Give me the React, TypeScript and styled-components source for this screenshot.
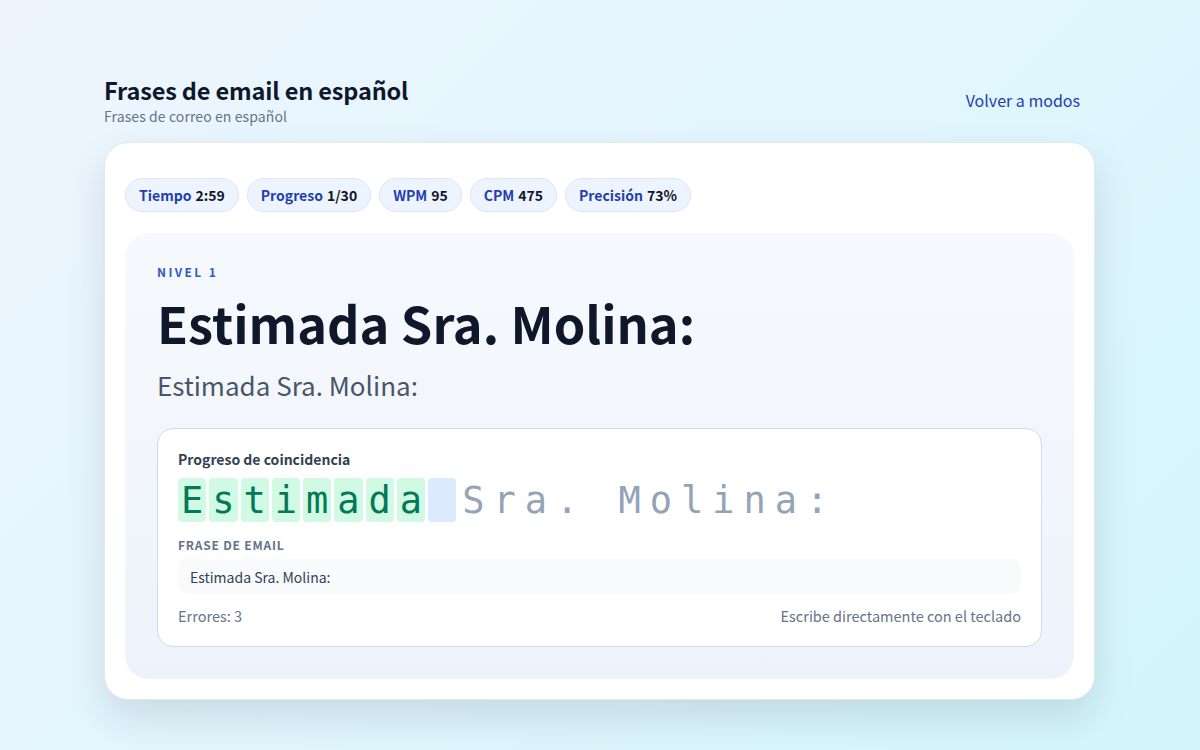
import styled, { createGlobalStyle } from "styled-components";

const GlobalStyle = createGlobalStyle`
  * { box-sizing: border-box; }
  html, body { margin: 0; padding: 0; }
  body {
    font-family: "Noto Sans CJK JP", "Noto Sans", sans-serif;
    color: #0f172a;
  }
`;

const Page = styled.div`
  min-height: 750px;
  background: linear-gradient(135deg, #eef5ff 0%, #e2f6fd 50%, #d2f6fb 100%);
  padding: 74px 105px 50px 104px;
`;

const Header = styled.header`
  display: flex;
  justify-content: space-between;
  align-items: center;
  margin-bottom: 16px;
`;

const TitleBlock = styled.div`
  display: flex;
  flex-direction: column;
`;

const PageTitle = styled.h1`
  margin: 0;
  font-size: 23.5px;
  line-height: 32px;
  font-weight: 700;
  letter-spacing: -0.15px;
  color: #0f172a;
`;

const PageSubtitle = styled.p`
  margin: 0;
  font-size: 14px;
  line-height: 20px;
  letter-spacing: 0.1px;
  color: #64748b;
`;

const BackLink = styled.a`
  font-size: 16px;
  color: #1e40af;
  text-decoration: none;
  margin-right: 15px;
  cursor: pointer;
`;

const Card = styled.section`
  background: #ffffff;
  border-radius: 24px;
  border: 1px solid #e2e8f0;
  box-shadow: 0 18px 40px rgba(15, 23, 42, 0.12);
  padding: 35px 20px 20px 20px;
`;

const Stats = styled.div`
  display: flex;
  gap: 8px;
  margin-bottom: 21px;
`;

const Pill = styled.div`
  display: flex;
  align-items: center;
  gap: 4px;
  height: 34px;
  padding: 0 13px;
  border-radius: 999px;
  background: #eef4ff;
  border: 1px solid #dbe6f7;
  font-size: 14px;
  font-weight: 700;
`;

const PillLabel = styled.span`
  color: #1e40af;
`;

const PillValue = styled.span`
  color: #0f172a;
`;

const Panel = styled.div`
  border-radius: 24px;
  background: linear-gradient(180deg, #f6f9fd 0%, #eef3fb 100%);
  padding: 30px 32px 32px 32px;
`;

const Level = styled.div`
  font-size: 12px;
  font-weight: 700;
  letter-spacing: 2.4px;
  color: #2f5bc7;
  line-height: 18px;
`;

const Phrase = styled.h2`
  margin: 6px 0 0 0;
  font-size: 50.5px;
  line-height: 70px;
  font-weight: 700;
  color: #0f172a;
`;

const Translation = styled.p`
  margin: 12px 0 0 0;
  font-size: 26px;
  line-height: 32px;
  color: #475569;
`;

const MatchBox = styled.div`
  margin-top: 27px;
  background: #ffffff;
  border: 1px solid #c9dcea;
  border-radius: 16px;
  padding: 20px;
`;

const MatchLabel = styled.div`
  font-size: 14px;
  font-weight: 700;
  color: #334155;
  line-height: 20px;
`;

const CharRow = styled.div`
  display: flex;
  gap: 3px;
  margin-top: 9px;
`;

const Char = styled.span<{ $state: "done" | "current" | "todo" }>`
  display: flex;
  align-items: center;
  justify-content: center;
  width: 28.25px;
  height: 44px;
  border-radius: 4px;
  font-family: "DejaVu Sans Mono", "Liberation Mono", monospace;
  font-size: 37px;
  background: ${(p) =>
    p.$state === "done" ? "#d1fae5" : p.$state === "current" ? "#dbeafe" : "transparent"};
  color: ${(p) => (p.$state === "done" ? "#047857" : "#94a3b8")};
`;

const SectionLabel = styled.div`
  margin-top: 15px;
  font-size: 12px;
  font-weight: 700;
  letter-spacing: 0.8px;
  color: #64748b;
  line-height: 16px;
`;

const EmailBox = styled.div`
  margin-top: 6px;
  height: 35px;
  display: flex;
  align-items: center;
  padding: 0 12px;
  border-radius: 10px;
  background: #f8fafc;
  font-size: 14px;
  color: #334155;
`;

const Footer = styled.div`
  display: flex;
  justify-content: space-between;
  margin-top: 12px;
  font-size: 14.5px;
  line-height: 20px;
  color: #64748b;
`;

const target = "Estimada Sra. Molina:";
const typed = 8;

const stats = [
  { label: "Tiempo", value: "2:59" },
  { label: "Progreso", value: "1/30" },
  { label: "WPM", value: "95" },
  { label: "CPM", value: "475" },
  { label: "Precisión", value: "73%" },
];

export default function App() {
  return (
    <>
      <GlobalStyle />
      <Page>
        <Header>
          <TitleBlock>
            <PageTitle>Frases de email en español</PageTitle>
            <PageSubtitle>Frases de correo en español</PageSubtitle>
          </TitleBlock>
          <BackLink>Volver a modos</BackLink>
        </Header>
        <Card>
          <Stats>
            {stats.map((s) => (
              <Pill key={s.label}>
                <PillLabel>{s.label}</PillLabel>
                <PillValue>{s.value}</PillValue>
              </Pill>
            ))}
          </Stats>
          <Panel>
            <Level>NIVEL 1</Level>
            <Phrase>{target}</Phrase>
            <Translation>{target}</Translation>
            <MatchBox>
              <MatchLabel>Progreso de coincidencia</MatchLabel>
              <CharRow>
                {target.split("").map((c, i) => (
                  <Char
                    key={i}
                    $state={i < typed ? "done" : i === typed ? "current" : "todo"}
                  >
                    {c === " " ? "\u00a0" : c}
                  </Char>
                ))}
              </CharRow>
              <SectionLabel>FRASE DE EMAIL</SectionLabel>
              <EmailBox>{target}</EmailBox>
              <Footer>
                <span>Errores: 3</span>
                <span>Escribe directamente con el teclado</span>
              </Footer>
            </MatchBox>
          </Panel>
        </Card>
      </Page>
    </>
  );
}
